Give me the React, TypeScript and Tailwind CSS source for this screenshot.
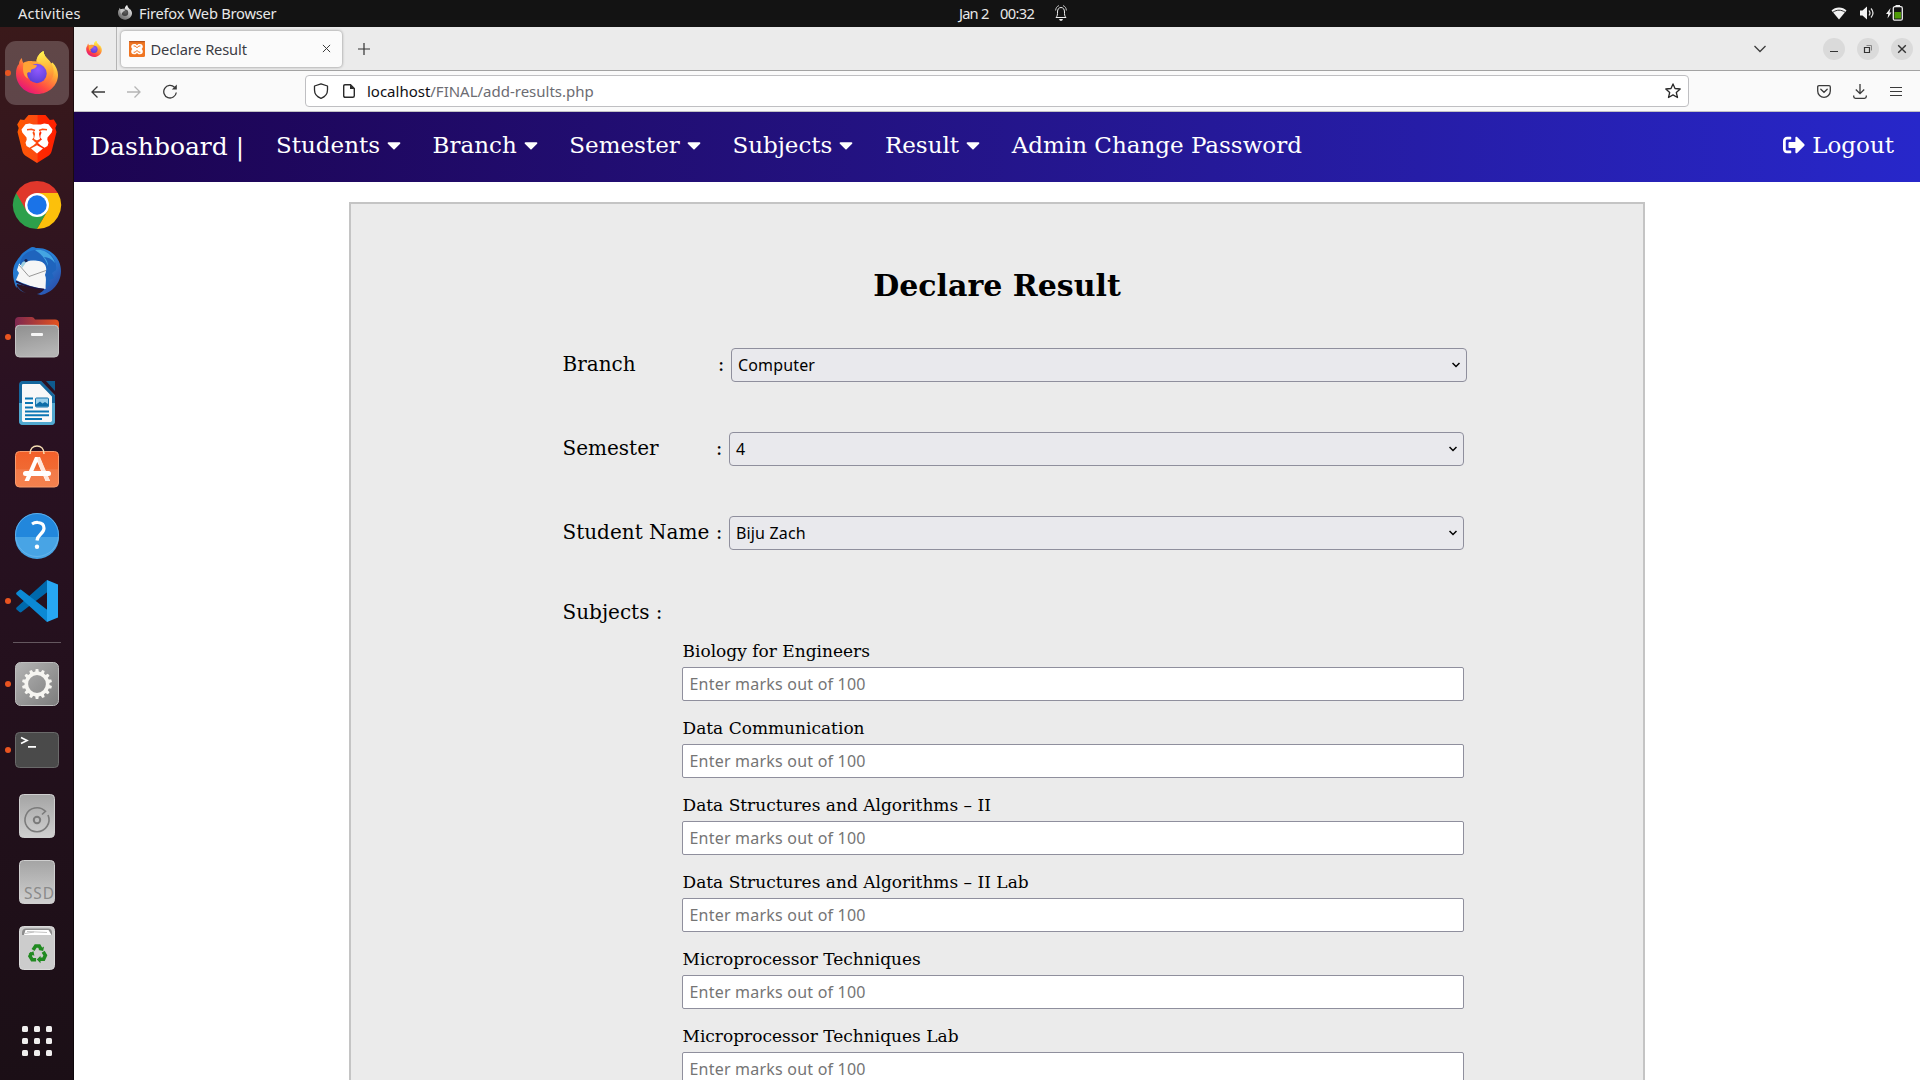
import type { ReactNode } from "react";
import { FaCaretDown, FaSignOutAlt } from "react-icons/fa";

const ui = "font-['Noto_Sans','Open_Sans',sans-serif]";

/* ---------- logos ---------- */

function FirefoxLogo({ id, className, gray = false }: { id: string; className: string; gray?: boolean }) {
  const c = gray
    ? ["#f2f2f2", "#c4c4c4", "#8a8a8a", "#6e6e6e", "#3c3c3c", "#606060"]
    : ["#fff44f", "#ffa436", "#ff4a42", "#e2107f", "#5b3fd6", "#9059ff"];
  return (
    <svg viewBox="0 0 42 43" className={className}>
      <defs>
        <linearGradient id={id + "a"} x1="0.85" y1="0.1" x2="0.25" y2="1">
          <stop offset="0.05" stopColor={c[0]} />
          <stop offset="0.35" stopColor={c[1]} />
          <stop offset="0.68" stopColor={c[2]} />
          <stop offset="1" stopColor={c[3]} />
        </linearGradient>
        <radialGradient id={id + "b"} cx="0.55" cy="0.3" r="0.7">
          <stop offset="0" stopColor={c[5]} />
          <stop offset="1" stopColor={c[4]} />
        </radialGradient>
        <linearGradient id={id + "c"} x1="0.5" y1="0" x2="0.6" y2="1">
          <stop offset="0" stopColor={c[0]} />
          <stop offset="0.6" stopColor={c[1]} stopOpacity="0.9" />
          <stop offset="1" stopColor={c[2]} stopOpacity="0" />
        </linearGradient>
      </defs>
      <path
        d="M6 7c0 2 .6 4 1.500 5C9 10.500 12 10 14 10c0 0 0 0 6.500.5C20.500 6 24 1.500 27.500 0c.3 4 2.500 6.500 5.500 9.500 1 1 1.500 2.500 1.500 3.500l2-1.500c3.500 3.500 5.500 8.500 5.500 12.500C42 34.500 32.500 43 21.500 43 9.500 43 0 34 0 22.500c0-4 1-7.500 3-9.500C3 10.500 4 8.500 6 7z"
        fill={`url(#${id}a)`}
      />
      <path
        d="M27.500 0c.3 4 2.500 6.500 5.500 9.500 4 4 5 9 4.500 13-1 7.500-6.500 12-12.500 12.500 5-3 7.500-7.500 7-13-.5-5-4.500-8-8-10-1.500-.8-3-1.500-3.500-1.500C20.500 6 24 1.500 27.500 0z"
        fill={`url(#${id}c)`}
      />
      <circle cx="21" cy="22.500" r="9.700" fill={`url(#${id}b)`} />
      <path
        d="M7.500 12C10 10.800 13 10.500 14.500 12c1.500 1.700 3.500 2 6.300 2.200.3 2-2.800 3.800-4.800 4-1.500.6-1.500 2-1 3.300-2.500-.8-4-.3-4 1.500 0 2 .6 3.500 1.500 4.800C8 26 6 21 7.500 12z"
        fill={c[1]}
      />
    </svg>
  );
}

function XamppIcon() {
  return (
    <svg viewBox="0 0 16 16" className="size-4 shrink-0">
      <rect width="16" height="16" rx="1.500" fill="#f07522" />
      <rect width="16" height="1.300" rx=".6" fill="#b9541a" />
      <path
        d="M5 3h1.500L8 4.200 9.500 3H11q2.800.2 2.800 2.800 0 1.400-1.200 2.300 1.200.9 1.200 2.300 0 2.600-2.800 2.800H9.500L8 12l-1.500 1.200H5q-2.800-.2-2.800-2.800 0-1.400 1.200-2.300-1.200-.9-1.200-2.300Q2.200 3.200 5 3z"
        fill="#fff"
      />
      <path d="M4.600 5h1.700L7.400 6.400h1.200L9.700 5h1.700M4.600 11.200h1.700L7.400 9.800h1.200l1.100 1.400h1.700" fill="none" stroke="#f07522" strokeWidth="1" />
    </svg>
  );
}

/* ---------- dock ---------- */

function Slot({ running, children }: { running?: boolean; children: ReactNode }) {
  return (
    <svg viewBox="0 0 74 66" className="block h-[66px] w-[74px] shrink-0">
      {running && <circle cx="8" cy="33" r="3" fill="#e95420" />}
      {children}
    </svg>
  );
}

function Dock() {
  const teeth = Array.from({ length: 14 }, (_, i) => (i * 360) / 14);
  return (
    <aside className="flex w-[74px] shrink-0 flex-col border-r border-black/50 bg-linear-to-b from-[#3a191a] via-[#2a1122] via-35% to-[#1b0f16] pt-[13px]">
      <div className="flex h-[66px] w-[74px] shrink-0 items-center">
        <div className="z-10 ml-[5px] size-1.5 shrink-0 rounded-full bg-[#e95420]" />
        <div className="-ml-1.5 flex size-16 shrink-0 items-center justify-center rounded-[11px] bg-white/20 pb-0.5">
          <FirefoxLogo id="dock" className="h-[43px] w-[42px]" />
        </div>
      </div>
      <div className="flex h-[66px] w-[74px] shrink-0 items-center justify-center">
        <svg viewBox="0 0 40 48" className="h-12 w-10">
          <defs>
            <linearGradient id="brave" x1="0" x2="1">
              <stop offset="0" stopColor="#ff5a00" />
              <stop offset="0.5" stopColor="#fb4a12" />
              <stop offset="0.53" stopColor="#ff2a00" />
              <stop offset="1" stopColor="#ff2000" />
            </linearGradient>
          </defs>
          <path d="M11.500 0h17l4.300 5 4-.6 3 5-1.500 3.600 1.200 4-4.800 19c-.6 2.200-1.600 3.500-3.200 4.700L20 48 8.500 40.700C6.900 39.500 5.900 38.200 5.300 36L.5 17l1.200-4L.2 9.400l3-5 4 .6z" fill="url(#brave)" />
          <path d="M8.500 9.200l4.200-.6 3.600 1H20h3.700l3.600-1 4.200.6 4 5.300-.8 3-4.200 5-.2 2.300 1.200 3-1 3.300-3 1.700-4-2.500-2.300-2 .2-1.300 3.600-2.500-1.700-2 .2-2.300 1-2.500-.7-1.200L20 15l-3.800 1.500-.7 1.200 1 2.500.2 2.300-1.700 2 3.600 2.500.2 1.300-2.300 2-4 2.500-3-1.700-1-3.300 1.200-3-.2-2.300-4.200-5-.8-3z" fill="#fff" />
          <path d="M17.600 13h4.800l.6 3-1 3 1 5-3 1.600L17 24l1-5-1-3z" fill="#fff" />
          <path d="M10 14.700l4.500-.4 3.500 1.200M30 14.700l-4.500-.4-3.500 1.200M17 25.300l3 1.700 3-1.700M20 27v2" stroke="#ff4a10" strokeWidth="1.500" fill="none" />
          <path d="M14 33.500l6-3.200 6 3.200-6 5z" fill="#fff" />
        </svg>
      </div>
      <Slot>
        <path d="M16.200 21A24 24 0 0 0 37 57l10.400-18L37 33z" fill="#2da04b" />
        <path d="M57.800 21A24 24 0 0 1 37 57l10.400-18L37 21z" fill="#fcc00b" />
        <path d="M16.200 21A24 24 0 0 1 57.800 21H37L26.600 39z" fill="#e0372b" />
        <circle cx="37" cy="33" r="12" fill="#fff" />
        <circle cx="37" cy="33" r="9.700" fill="#1a73e8" />
      </Slot>
      <Slot>
        <defs>
          <linearGradient id="tb" x1="0" x2="1" y1="0" y2="1">
            <stop offset="0" stopColor="#1d6fcb" />
            <stop offset="0.5" stopColor="#2a83d8" />
            <stop offset="1" stopColor="#2a3f9f" />
          </linearGradient>
        </defs>
        <path d="M30 10c2-1.500 4-.8 6 0C50 9 61 20 61 33c0 12-9 22-20 24l-4-1c3-.5 5-2 6.500-4L17 46l-.5 4C14 45 12 37 13.500 30 15 24 19 20 21 17c2-3 6-5 9-7z" fill="url(#tb)" />
        <path d="M19 26l8-4 20 1 1 4-2.500 24C35 50 24 46 16 42l3-7-2-3z" fill="#f6f6f6" />
        <path d="M19 27l10 11.500 17-6" fill="none" stroke="#8d8d8d" strokeWidth="0.900" />
        <path d="M20 25c2-11 14-16 25-12 8 3 12 11 11 19l-4 3 2 5-5 2 1 5-4 3c-1-5 1-9-1-13 2-5 2-10-3-13-7-3-15-2-18 2l-4 1z" fill="#1f64bd" />
        <path d="M35 12c9-2 18 5 20 13-3-4-7-6-11-6 3 3 4 6 4 9-3-8-7-12-13-16z" fill="#44a5e2" />
        <path d="M21 27c1-3 2-4 5-4l-1 3-3 4z" fill="#9fd0e0" />
        <circle cx="26" cy="22.500" r="1.600" fill="#1a2450" />
        <path d="M16 43.500c8 4 17 7 28 8" stroke="#21103a" strokeWidth="1.500" fill="none" />
        <path d="M15 44c3 6 6 9 11 11-4-1-9-4-11-11z" fill="#2d6dc4" />
      </Slot>
      <Slot running>
        <defs>
          <linearGradient id="folder" x1="0" x2="1">
            <stop offset="0" stopColor="#7d2750" />
            <stop offset="1" stopColor="#e5531e" />
          </linearGradient>
          <linearGradient id="steel" x1="0" y1="0" x2="0.3" y2="1">
            <stop offset="0" stopColor="#8f8f8f" />
            <stop offset="1" stopColor="#b4b4b4" />
          </linearGradient>
        </defs>
        <path d="M15 25v-8q0-4 4-4h13q2 0 3 2.500h20q4 0 4 4V25z" fill="url(#folder)" />
        <rect x="15.500" y="21.300" width="43" height="31.700" rx="4" fill="url(#steel)" stroke="#c4c4c4" />
        <rect x="31" y="29" width="12" height="3" rx="1" fill="#f6f6f6" />
      </Slot>
      <Slot>
        <path d="M23 11.500h18L54.500 25v27q0 2.500-3 2.500H23q-3 0-3-3V14.500q0-3 3-3z" fill="#f8f8f8" />
        <path d="M23 12.500h17.500L53.500 26v25q0 2.500-2.500 2.500H23q-2.500 0-2.500-2.500V15Q20.500 12.500 23 12.500z" fill="none" stroke="#15679d" strokeWidth="3" />
        <path d="M20.500 33v18q0 2.500 2.500 2.500h28q2.500 0 2.500-2.500V33" fill="none" stroke="#51a9d0" strokeWidth="3" />
        <path d="M46 11h9v10z" fill="#0f5b8f" />
        <path d="M25 28.500h8M25 33h8M25 37.500h8M25 41.500h24M25 45.300h24M25 49h17" stroke="#0a76b4" strokeWidth="2" />
        <rect x="35.500" y="28" width="13" height="9" rx="1" fill="#9bd0ea" stroke="#1675ad" />
        <path d="M36 36.500v-2l4-3 2.500 2 2.500-1.500 3 2v2.500z" fill="#0e6ea8" />
      </Slot>
      <Slot>
        <defs>
          <linearGradient id="store" x1="0" y1="0" x2="0" y2="1">
            <stop offset="0" stopColor="#f3602a" />
            <stop offset="0.5" stopColor="#f06a33" />
            <stop offset="0.51" stopColor="#f27a48" />
            <stop offset="1" stopColor="#f4814e" />
          </linearGradient>
        </defs>
        <rect x="15.500" y="15.500" width="43" height="35.500" rx="4" fill="url(#store)" stroke="#f79a6d" />
        <path d="M30 18c0-5 3-8 7-8s7 3 7 8" fill="none" stroke="#f7dfb4" strokeWidth="1.500" />
        <path d="M35 21h4.500L50 45h-4.500l-8.200-19-8.300 19h-4.500z" fill="#fff" />
        <path d="M37.300 21H40l10 24h-4l-7-16z" fill="#ffe6da" />
        <rect x="23" y="35" width="28" height="5" rx="2.500" fill="#fff" />
      </Slot>
      <Slot>
        <circle cx="37" cy="33" r="22" fill="#2287dc" />
        <path d="M15 35a22 22 0 0 0 44 0z" fill="#48a4e5" />
        <circle cx="37" cy="33" r="21.500" fill="none" stroke="#6bb8ee" strokeWidth="0.800" />
        <path d="M32 22c2-1.300 4-1.700 6-1.500 4 .3 6 2.700 6 5.700 0 5.500-6.500 6-7 12.300" fill="none" stroke="#fff" strokeWidth="3.200" />
        <circle cx="37" cy="44.800" r="2.200" fill="#fff" />
      </Slot>
      <Slot running>
        <path d="M47 12 16.500 39.500q-.8 1 0 2l3 2.500q1 .8 2 0L50 22z" fill="#0069ac" />
        <path d="M47 54 16.500 26.500q-.8-1 0-2l3-2.500q1-.8 2 0L50 44z" fill="#0c89d4" />
        <path d="M47 12 58 16.500v33L47 54V12z" fill="#27a7f2" />
      </Slot>
      <div className="flex h-[17px] shrink-0 items-center justify-center">
        <div className="h-px w-12 bg-[#64575f]" />
      </div>
      <Slot running>
        <defs>
          <linearGradient id="gear" x1="0" y1="0" x2="1" y2="1">
            <stop offset="0" stopColor="#b4b4b4" />
            <stop offset="1" stopColor="#7c7c7c" />
          </linearGradient>
        </defs>
        <rect x="15.500" y="11.500" width="43" height="43" rx="5" fill="url(#gear)" stroke="#bdbdbd" />
        <circle cx="37" cy="33" r="10.700" fill="none" stroke="#f6f5f1" strokeWidth="3.600" />
        {teeth.map((a) => (
          <path key={a} d="M35 22l.7-4h2.600l.7 4z" fill="#f6f5f1" transform={`rotate(${a} 37 33)`} />
        ))}
      </Slot>
      <Slot running>
        <rect x="15.500" y="15.500" width="43" height="35" rx="4" fill="#4a4a4a" stroke="#6a6a6a" />
        <path d="M21 20.500l6 3-6 3M28 29.800h8" fill="none" stroke="#fff" strokeWidth="1.700" />
      </Slot>
      <Slot>
        <defs>
          <linearGradient id="disk" x1="0" y1="0" x2="0" y2="1">
            <stop offset="0" stopColor="#a4a4a4" />
            <stop offset="1" stopColor="#d0d0d0" />
          </linearGradient>
        </defs>
        <rect x="19.500" y="11.500" width="35" height="43" rx="4" fill="url(#disk)" stroke="#cfcfcf" />
        <path d="M42 31.500l3.500-3.200A12 12 0 1 0 48 32" fill="none" stroke="#7b7b7b" strokeWidth="1.600" />
        <circle cx="37" cy="37" r="3.200" fill="none" stroke="#7b7b7b" strokeWidth="2" />
      </Slot>
      <Slot>
        <rect x="19.500" y="11.500" width="35" height="43" rx="4" fill="url(#disk)" stroke="#cfcfcf" />
        <text x="24" y="50" fontSize="15.500" textLength="30" fill="#8a8a8a" fontFamily="Noto Sans">
          SSD
        </text>
      </Slot>
      <Slot>
        <rect x="19.500" y="11.500" width="35" height="43" rx="4" fill="#cccccc" stroke="#dadada" />
        <path d="M22 18q0-4.500 4-4.500h22q4 0 4 4.500v2H22z" fill="#8c8c8c" />
        <path d="M24 20l1.500-5h23l3 5z" fill="#fff" />
        <path d="M27 16.500l20 1M25 18.500l9-1.500" stroke="#b5b5b5" strokeWidth="0.800" />
        <g transform="translate(37 39) scale(.88) translate(-37 -39)">
          <g fill="none" stroke="#218a21" strokeWidth="4">
            <path d="M32.500 34.500l3-4.500h4l2 3.500" />
            <path d="M44 36.500l2.500 4-2 4.500H40" />
            <path d="M36 45.500h-4.500l-2.500-4 2-4" />
          </g>
          <path d="M38.500 34.500l5.500 1 1-5zM41 41v8.500l-4.200-4.200zM27.500 38.500l5.500-2.500 1 5z" fill="#218a21" />
        </g>
      </Slot>
      <div className="mt-[45px] grid grid-cols-[6px_6px_6px] justify-center gap-1.5">
        {Array.from({ length: 9 }, (_, i) => (
          <div key={i} className="size-1.5 rounded-[1.500px] bg-[#f0eeee]" />
        ))}
      </div>
    </aside>
  );
}

/* ---------- system bar ---------- */

function TopBar() {
  return (
    <header className={`flex h-[27px] shrink-0 items-center bg-[#131313] text-[14.670px] leading-[24px] text-[#e8e8e8] ${ui}`}>
      <span className="w-[100px] pb-0.5 pl-[18px] tracking-[0.150px]">Activities</span>
      <FirefoxLogo id="bar" gray className="mb-0.5 ml-[18px] h-[15px] w-[14px]" />
      <span className="ml-[7px] w-[820px] pb-0.5 tracking-[-0.230px]">Firefox Web Browser</span>
      <span className="w-[41px] pb-0.5 whitespace-nowrap tracking-[-0.800px]">Jan 2</span>
      <span className="w-[55px] pb-0.5 whitespace-nowrap tracking-[-0.650px]">00:32</span>
      <svg viewBox="0 0 12 16" className="mb-px h-4 w-3" fill="none" stroke="#eee" strokeWidth="1">
        <path d="M1 12.500c1.500-1.500 1.500-3 1.500-5.500C2.500 4 4 2.500 6 2.500S9.500 4 9.500 7c0 2.500 0 4 1.500 5.500z" />
        <path d="M.6 5.500C.8 3 2 1.200 4 .6M11.400 5.500C11.200 3 10 1.200 8 .6" strokeWidth=".8" />
        <path d="M4 14h4l-1 1.800H5z" fill="#eee" stroke="none" />
      </svg>
      <div className="mr-[17px] ml-auto flex items-center">
        <svg viewBox="0 0 16 13" className="h-[13px] w-4">
          <path d="M8 12.500 .5 3.500C2.500 1.500 5 .5 8 .5s5.500 1 7.500 3z" fill="#f2f2f2" />
          <path d="M2 5.200c3.800-2.700 8.200-2.700 12 0" fill="none" stroke="#131313" strokeWidth=".9" />
        </svg>
        <svg viewBox="0 0 16 14" className="mb-px ml-[13px] h-3.5 w-4">
          <path d="M0 4.500h2.500L7 .5v13L2.500 9.500H0z" fill="#f2f2f2" />
          <path d="M9 4.500q2 2.500 0 5M11 2.500q4 4.500 0 9" fill="none" stroke="#e2e2e2" strokeWidth="1.200" />
        </svg>
        <svg viewBox="0 0 17 16" className="mb-0.5 ml-[10px] h-4 w-[17px]">
          <path d="M4.500 3 0 9h2.300L1.500 13.500 5.500 7.500H3.500z" fill="#f2f2f2" />
          <rect x="7.300" y="1.700" width="9" height="13.500" rx="1.500" fill="none" stroke="#eee" strokeWidth="1.300" />
          <rect x="9.500" y="0" width="4.500" height="2" fill="#eee" />
          <rect x="8.500" y="7" width="6.500" height="6.500" fill="#4e9a06" />
        </svg>
      </div>
    </header>
  );
}

/* ---------- browser chrome ---------- */

function WindowButton({ children, className = "" }: { children: ReactNode; className?: string }) {
  return (
    <div className={`flex size-[22px] items-center justify-center rounded-full bg-[#dadada] ${className}`}>
      <svg viewBox="0 0 10 10" className="size-2.5" fill="none" stroke="#333" strokeWidth="1">
        {children}
      </svg>
    </div>
  );
}

function TabStrip() {
  return (
    <div className={`flex h-11 shrink-0 items-center border-b border-[#a3a3a3] bg-[#ebebeb] ${ui}`}>
      <div className="flex h-full w-[43px] shrink-0 items-center justify-center border-r border-[#b4b4b4] pr-0.5">
        <FirefoxLogo id="pin" className="size-4" />
      </div>
      <div className="ml-1 flex h-9 w-[221px] shrink-0 items-center rounded bg-[#fbfbfb] pl-2 shadow-[0_0_3px_rgba(0,0,0,0.45)]">
        <XamppIcon />
        <span className="ml-[5.500px] w-[171px] pt-px text-[14.670px] leading-5 tracking-[-0.150px] text-[#3c3c44]">Declare Result</span>
        <svg viewBox="0 0 10 10" className="size-[9px] shrink-0" stroke="#3b3b3b" strokeWidth="1.100">
          <path d="M1 1l8 8M9 1 1 9" />
        </svg>
      </div>
      <svg viewBox="0 0 12 12" className="mt-px ml-[16px] size-3" stroke="#333" strokeWidth="1.200">
        <path d="M6 0v12M0 6h12" />
      </svg>
      <svg viewBox="0 0 12 8" className="mr-[57px] ml-auto h-2 w-3" fill="none" stroke="#3c3c3c" strokeWidth="1.300">
        <path d="M.5 1l5.500 5.500L11.500 1" />
      </svg>
      <WindowButton className="mr-3">
        <path d="M1 7.500h8" />
      </WindowButton>
      <WindowButton className="mr-3">
        <path d="M1.500 3.500h5v5h-5z" strokeWidth="1.200" />
        <path d="M3.500 1.500h5v5" stroke="#888" />
      </WindowButton>
      <WindowButton className="mr-[7px]">
        <path d="M1.200 1.200l7.600 7.600M8.800 1.200 1.200 8.800" strokeWidth="1.400" />
      </WindowButton>
    </div>
  );
}

function Toolbar() {
  return (
    <div className={`flex h-[41px] shrink-0 items-center border-b border-[#c2c2c4] bg-[#fafafa] ${ui}`}>
      <svg viewBox="0 0 14 12" className="mt-px ml-[17px] h-3 w-3.5" fill="none" stroke="#3a3a3a" strokeWidth="1.300">
        <path d="M14 6H1M6.500.5 1 6l5.500 5.500" />
      </svg>
      <svg viewBox="0 0 14 12" className="mt-px ml-[22px] h-3 w-3.5" fill="none" stroke="#b5b5b5" strokeWidth="1.300">
        <path d="M0 6h13M7.500.5 13 6l-5.500 5.500" />
      </svg>
      <svg viewBox="0 0 15 15" className="mt-px ml-[22px] size-[15px]" fill="none" stroke="#3a3a3a" strokeWidth="1.300">
        <path d="M13.300 8.500A6.300 6.300 0 1 1 11.500 3.200" />
        <path d="M13.800.5v5h-5z" fill="#3a3a3a" stroke="none" />
      </svg>
      <div className="ml-[127px] flex h-8 w-[1384px] items-center rounded border border-[#bfbfc2] bg-white">
        <svg viewBox="0 0 16 16" className="ml-[7px] size-4" fill="none" stroke="#2a2a2a" strokeWidth="1.300">
          <path d="M8 .8 14.500 3v4c0 3.500-2.500 6.800-6.500 8.300C4 13.800 1.500 10.500 1.500 7V3z" strokeLinejoin="round" />
        </svg>
        <svg viewBox="0 0 12 14" className="ml-[14px] h-3.5 w-3" fill="none" stroke="#2a2a2a" strokeWidth="1.400">
          <path d="M2 .7h5.500l3.800 3.800v7.300q0 1.500-1.500 1.500H2.200q-1.500 0-1.500-1.500V2.200Q.7.700 2 .7z" />
          <path d="M7 .5v4.500h4.500z" fill="#2a2a2a" stroke="none" />
        </svg>
        <span className="ml-[12px] pt-px text-[15px] tracking-[-0.010px] text-[#6c6c72]">
          <span className="text-[#0f0f14]">localhost</span>/FINAL/add-results.php
        </span>
        <svg viewBox="0 0 16 16" className="mr-[7px] ml-auto size-4" fill="none" stroke="#2a2a2a" strokeWidth="1.300" strokeLinejoin="round">
          <path d="M8 .9l2 4.600 5.200.5-3.900 3.500 1.200 5L8 11.900l-4.500 2.600 1.200-5L.8 6 6 5.500z" />
        </svg>
      </div>
      <svg viewBox="0 0 14 13" className="ml-[128px] h-[13px] w-3.5" fill="none" stroke="#3a3a3a" strokeWidth="1.300">
        <path d="M2 .7h10q1.300 0 1.300 1.300v4A6.300 6.300 0 0 1 .7 6V2Q.7.700 2 .7z" />
        <path d="M3.800 4.300 7 7.300l3.200-3" strokeLinecap="round" />
      </svg>
      <svg viewBox="0 0 14 15" className="ml-[22px] h-[15px] w-3.5" fill="none" stroke="#3a3a3a" strokeWidth="1.300">
        <path d="M7 0v9.500M2.800 5.500 7 9.700l4.200-4.200M.7 11.500v1q0 1.800 1.800 1.800h9q1.800 0 1.800-1.800v-1" />
      </svg>
      <svg viewBox="0 0 12 11" className="ml-[23px] h-[11px] w-3" fill="none" stroke="#3a3a3a" strokeWidth="1.200">
        <path d="M0 1.500h12M0 5.500h12M0 9.500h12" />
      </svg>
    </div>
  );
}

/* ---------- page ---------- */

const menus = ["Students", "Branch", "Semester", "Subjects", "Result"];

function NavBar() {
  return (
    <nav className="flex h-[70px] shrink-0 items-center bg-linear-to-r from-[#1c0450] to-[#2727ca] pl-4 text-[23px] leading-[26px] text-white">
      <a className="mr-5 w-[166px] text-[25px] whitespace-nowrap">Dashboard |</a>
      {menus.map((m) => (
        <a key={m} className="mr-[31.600px] flex items-center pb-1">
          {m}
          <FaCaretDown className="ml-[7px] h-[22px] w-3.5" />
        </a>
      ))}
      <a className="pb-1">Admin Change Password</a>
      <a className="mr-[26px] ml-auto flex items-center pb-1">
        <FaSignOutAlt className="mr-[7px] size-[22px]" />
        Logout
      </a>
    </nav>
  );
}

function SelectRow({ label, value, first }: { label: string; value: string; first?: boolean }) {
  return (
    <div className="mb-[50px] flex h-[34px] items-center pl-[211.500px]">
      <label className={`mr-[6.500px] flex justify-between pb-[3px] text-[20px] leading-6 whitespace-nowrap ${first ? "w-[162px]" : "w-[160px]"}`}>
        <span>{label}</span>
        <span>:</span>
      </label>
      <div className={`flex h-[34px] items-center justify-between rounded border border-[#8f8f9d] bg-[#e9e9ed] pr-1.5 pl-1.5 ${first ? "w-[736px]" : "w-[735px]"}`}>
        <span className={`text-[16px] leading-6 tracking-[0.150px] ${ui}`}>{value}</span>
        <svg viewBox="0 0 8 6" className="h-1.5 w-2" fill="none" stroke="#000" strokeWidth="1.500">
          <path d="M.5 1 4 4.500 7.500 1" />
        </svg>
      </div>
    </div>
  );
}

const subjects = [
  "Biology for Engineers",
  "Data Communication",
  "Data Structures and Algorithms – II",
  "Data Structures and Algorithms – II Lab",
  "Microprocessor Techniques",
  "Microprocessor Techniques Lab",
];

function ResultForm() {
  return (
    <main className="mx-auto mt-5 h-[1000px] w-[1296px] shrink-0 border-2 border-[#c4c4c4] bg-[#ebebeb] pt-[62px] text-black">
      <h1 className="mb-[42px] text-center text-[30px] leading-10 font-bold">Declare Result</h1>
      <SelectRow label="Branch" value="Computer" first />
      <SelectRow label="Semester" value="4" />
      <SelectRow label="Student Name" value="Biju Zach" />
      <p className="pl-[211.500px] text-[20px] leading-6">Subjects :</p>
      <div className="pl-[331px]">
        {subjects.map((s) => (
          <div key={s} className="pt-[17px]">
            <label className="mb-1.5 block pl-[0.500px] text-[17px] leading-5">{s}</label>
            <input
              placeholder="Enter marks out of 100"
              className={`block h-[34px] w-[782px] rounded-[2px] border border-[#8f8f9d] bg-white px-[6.500px] text-[16px] tracking-[0.210px] placeholder:text-[#757575] ${ui}`}
            />
          </div>
        ))}
      </div>
    </main>
  );
}

export default function App() {
  return (
    <div className="flex h-[1080px] w-[1920px] flex-col overflow-hidden bg-white">
      <TopBar />
      <div className="flex min-h-0 flex-1">
        <Dock />
        <div className="flex min-w-0 flex-1 flex-col overflow-hidden font-['DejaVu_Serif',serif]">
          <TabStrip />
          <Toolbar />
          <NavBar />
          <ResultForm />
        </div>
      </div>
    </div>
  );
}
